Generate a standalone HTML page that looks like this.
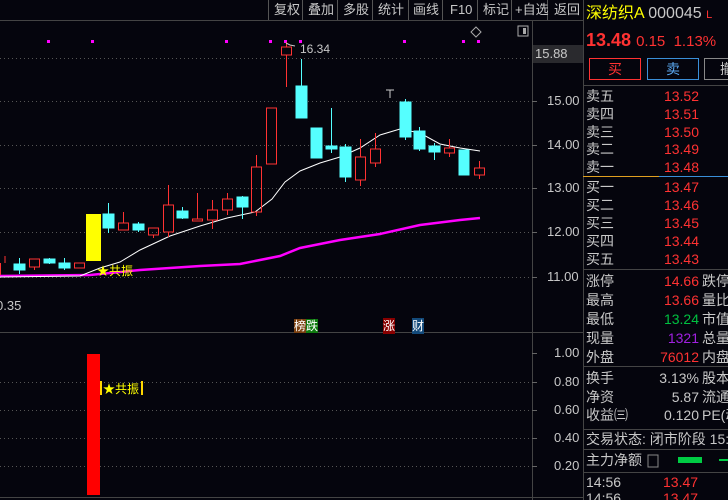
<!DOCTYPE html><html><head><meta charset="utf-8"><style>
html,body{margin:0;width:728px;height:500px;background:#05050d;overflow:hidden;font-family:"Liberation Sans","Noto Sans CJK SC",sans-serif;position:relative}
.t{position:absolute;white-space:nowrap;font-size:13px;line-height:16px}
.p{font-size:14px}
.g{color:#c8c8c8}.r{color:#ff3232}.y{color:#ffff00}
</style></head><body>
<svg width="728" height="500" style="position:absolute;left:0;top:0" xmlns="http://www.w3.org/2000/svg">
<g stroke="#555" stroke-width="1" stroke-dasharray="1,3">
<line x1="0" y1="58.5" x2="532" y2="58.5"/><line x1="0" y1="101.5" x2="532" y2="101.5"/><line x1="0" y1="145.5" x2="532" y2="145.5"/><line x1="0" y1="188.5" x2="532" y2="188.5"/><line x1="0" y1="232.5" x2="532" y2="232.5"/><line x1="0" y1="277.5" x2="532" y2="277.5"/>
<line x1="0" y1="382.5" x2="532" y2="382.5"/><line x1="0" y1="410.5" x2="532" y2="410.5"/><line x1="0" y1="438.5" x2="532" y2="438.5"/><line x1="0" y1="466.5" x2="532" y2="466.5"/>
</g>
<g stroke="#444" fill="none">
<line x1="0" y1="20.5" x2="583" y2="20.5"/>
<line x1="532.5" y1="20" x2="532.5" y2="500"/>
<line x1="0" y1="332.5" x2="583" y2="332.5"/>
<line x1="0" y1="497.5" x2="583" y2="497.5"/>
<line x1="583.5" y1="0" x2="583.5" y2="500"/>
<g stroke="#555"><line x1="268.5" y1="0" x2="268.5" y2="20"/><line x1="302.5" y1="0" x2="302.5" y2="20"/><line x1="337.5" y1="0" x2="337.5" y2="20"/><line x1="372.5" y1="0" x2="372.5" y2="20"/><line x1="408.5" y1="0" x2="408.5" y2="20"/><line x1="442.5" y1="0" x2="442.5" y2="20"/><line x1="477.5" y1="0" x2="477.5" y2="20"/><line x1="511.5" y1="0" x2="511.5" y2="20"/><line x1="547.5" y1="0" x2="547.5" y2="20"/></g>
<g stroke="#666"><line x1="532" y1="101.5" x2="537" y2="101.5"/><line x1="532" y1="145.5" x2="537" y2="145.5"/><line x1="532" y1="188.5" x2="537" y2="188.5"/><line x1="532" y1="232.5" x2="537" y2="232.5"/><line x1="532" y1="277.5" x2="537" y2="277.5"/><line x1="532" y1="353.5" x2="537" y2="353.5"/><line x1="532" y1="382.5" x2="537" y2="382.5"/><line x1="532" y1="410.5" x2="537" y2="410.5"/><line x1="532" y1="438.5" x2="537" y2="438.5"/><line x1="532" y1="466.5" x2="537" y2="466.5"/></g>
</g>
<rect x="533" y="45" width="50" height="18" fill="#2a2a2e"/>
<g fill="#ff00ff"><rect x="47" y="40" width="3" height="3"/><rect x="91" y="40" width="3" height="3"/><rect x="225" y="40" width="3" height="3"/><rect x="269" y="40" width="3" height="3"/><rect x="284" y="40" width="3" height="3"/><rect x="299" y="40" width="3" height="3"/><rect x="403" y="40" width="3" height="3"/><rect x="462" y="40" width="3" height="3"/><rect x="477" y="40" width="3" height="3"/></g>
<polyline fill="none" stroke="#ff00ff" stroke-width="2.5" points="0,276 90,275 140,270 200,266 240,264 280,256 300,248 340,240 380,234 420,225 460,220 480,218"/>
<polyline fill="none" stroke="#fff" stroke-width="1" points="0,277 80,276 100,268 120,262 140,250 170,236 200,226 227,218 255,212 272,199 285,182 300,171 320,163 340,157 360,148 380,135 400,129 420,133 440,144 460,148 480,151"/>
<rect x="86" y="214" width="15" height="47" fill="#ffff00"/>
<g stroke="#ff3232" fill="none">
<path d="M0.5 263v12M5 263v-7M29.5 259h10v8h-10zM34.5 267v3M74.5 263h10v5h-10zM118.5 223h10v7h-10zM123.5 212v11M148.5 228h10v7h-10zM153.5 235v3M163.5 205h10v27h-10zM168.5 185v20M168.5 232v5M192.5 219h10v2h-10zM197.5 193v26M207.5 210h10v10h-10zM212.5 200v10M212.5 220v9M222.5 199h10v11h-10zM227.5 193v6M227.5 210v5M251.5 167h10v45h-10zM256.5 155v12M256.5 212v4M266.5 108h10v56h-10zM281.5 47h10v8h-10zM286.5 42v5M286.5 55v32M355.5 157h10v23h-10zM360.5 139v18M360.5 180v6M370.5 149h10v14h-10zM375.5 133v16M375.5 163v4M444.5 148h10v5h-10zM449.5 139v9M449.5 153v4M474.5 168h10v7h-10zM479.5 161v7M479.5 175v4"/>
</g>
<g fill="#55ffff" stroke="#55ffff">
<rect x="14" y="264" width="11" height="6"/><path d="M19.5 258v16" fill="none"/>
<rect x="44" y="259" width="11" height="4"/><path d="M49.5 258v6" fill="none"/>
<rect x="59" y="263" width="11" height="5"/><path d="M64.5 258v12" fill="none"/>
<rect x="103" y="214" width="11" height="14"/><path d="M108.5 203v30" fill="none"/>
<rect x="177" y="211" width="11" height="7"/><path d="M182.5 207v12" fill="none"/>
<rect x="133" y="224" width="11" height="6"/><path d="M138.5 222v10" fill="none"/>
<rect x="237" y="197" width="11" height="10"/><path d="M242.5 196v23" fill="none"/>
<rect x="296" y="86" width="11" height="32"/><path d="M301.5 59v27" fill="none"/>
<rect x="311" y="128" width="11" height="30"/>
<rect x="326" y="146" width="11" height="3"/><path d="M331.5 108v45" fill="none"/>
<rect x="340" y="147" width="11" height="30"/><path d="M345.5 144v38" fill="none"/>
<rect x="400" y="102" width="11" height="35"/><path d="M405.5 99v41" fill="none"/>
<rect x="414" y="131" width="11" height="18"/><path d="M419.5 127v24" fill="none"/>
<rect x="429" y="146" width="11" height="6"/><path d="M434.5 143v17" fill="none"/>
<rect x="459" y="150" width="10" height="25"/>
</g>
<path d="M286 43l4 2l5 1" stroke="#ccc" fill="none"/>
<path d="M386 90h8M390 90v8" stroke="#ccc" fill="none"/>
<rect x="87" y="354" width="13" height="141" fill="#ff0000"/>
<rect x="100" y="381" width="2" height="14" fill="#ffd700"/><rect x="141" y="381" width="2" height="14" fill="#ffd700"/>
<path d="M476 27l5 5l-5 5l-5-5z" stroke="#aaa" fill="none"/>
<rect x="518" y="26" width="10" height="10" stroke="#aaa" fill="none"/><rect x="523" y="28" width="3" height="6" fill="#aaa"/>
<rect x="589.5" y="58.5" width="51" height="21" stroke="#ff3232" fill="none"/>
<rect x="647.5" y="58.5" width="51" height="21" stroke="#3a8fd8" fill="none"/>
<rect x="704.5" y="58.5" width="30" height="21" stroke="#888" fill="none"/>
<g stroke="#444"><line x1="583" y1="85.5" x2="728" y2="85.5"/><line x1="583" y1="269.5" x2="728" y2="269.5"/><line x1="583" y1="366.5" x2="728" y2="366.5"/><line x1="583" y1="429.5" x2="728" y2="429.5"/><line x1="583" y1="449.5" x2="728" y2="449.5"/><line x1="583" y1="472.5" x2="728" y2="472.5"/></g>
<line x1="583" y1="176.5" x2="659" y2="176.5" stroke="#e0a020"/><line x1="659" y1="176.5" x2="728" y2="176.5" stroke="#3a8fd8"/>
<rect x="678" y="457" width="24" height="6" fill="#00cc44"/><rect x="719" y="459" width="9" height="2" fill="#00cc44"/>
<rect x="648" y="455" width="10" height="12" stroke="#888" fill="none"/>
</svg>
<div class="t g" style="left:274px;top:2px">复权</div><div class="t g" style="left:308px;top:2px">叠加</div><div class="t g" style="left:343px;top:2px">多股</div><div class="t g" style="left:378px;top:2px">统计</div><div class="t g" style="left:413px;top:2px">画线</div><div class="t g" style="left:450px;top:2px">F10</div><div class="t g" style="left:483px;top:2px">标记</div><div class="t g" style="left:515px;top:2px">+自选</div><div class="t g" style="left:554px;top:2px">返回</div>
<div class="t g" style="left:300px;top:41px;font-size:12px">16.34</div>
<div class="t g" style="left:535px;top:46px">15.88</div>
<div class="t g" style="left:547px;top:93px">15.00</div><div class="t g" style="left:547px;top:137px">14.00</div><div class="t g" style="left:547px;top:180px">13.00</div><div class="t g" style="left:547px;top:224px">12.00</div><div class="t g" style="left:547px;top:269px">11.00</div>
<div class="t g" style="left:554px;top:345px">1.00</div><div class="t g" style="left:554px;top:374px">0.80</div><div class="t g" style="left:554px;top:402px">0.60</div><div class="t g" style="left:554px;top:430px">0.40</div><div class="t g" style="left:554px;top:458px">0.20</div>
<div class="t g" style="left:-4px;top:298px">0.35</div>
<div class="t y" style="left:97px;top:263px;font-size:12px">★共振</div>
<div class="t y" style="left:103px;top:381px;font-size:12px">★共振</div>
<div class="t" style="left:294px;top:318px;font-size:12px;color:#fff"><span style="background:#7a4010">榜</span><span style="background:#107a10">跌</span></div>
<div class="t" style="left:383px;top:318px;font-size:12px;color:#fff;background:#800">涨</div>
<div class="t" style="left:412px;top:318px;font-size:12px;color:#fff;background:#134a7a">财</div>
<div class="t y" style="left:586px;top:5px;font-size:16px;line-height:18px">深纺织A <span class="g">000045</span> <span class="r" style="font-size:11px">L</span></div>
<div class="t r" style="left:586px;top:30px;font-size:18px;line-height:20px"><b>13.48</b> <span style="font-size:15px">0.15&nbsp; 1.13%</span></div>
<div class="t r p" style="left:608px;top:61px">买</div><div class="t p" style="left:666px;top:61px;color:#5aa8f0">卖</div><div class="t g p" style="left:720px;top:61px">撤</div>
<div class="t g p" style="left:586px;top:88px;line-height:17.8px">卖五<br>卖四<br>卖三<br>卖二<br>卖一</div>
<div class="t r p" style="left:659px;top:88px;line-height:17.8px;text-align:right;width:40px">13.52<br>13.51<br>13.50<br>13.49<br>13.48</div>
<div class="t g p" style="left:586px;top:178px;line-height:18px">买一<br>买二<br>买三<br>买四<br>买五</div>
<div class="t r p" style="left:659px;top:178px;line-height:18px;text-align:right;width:40px">13.47<br>13.46<br>13.45<br>13.44<br>13.43</div>
<div class="t g p" style="left:586px;top:272px;line-height:19px">涨停<br>最高<br>最低<br>现量<br>外盘</div>
<div class="t p" style="left:640px;top:272px;line-height:19px;text-align:right;width:59px"><span class="r">14.66</span><br><span class="r">13.66</span><br><span style="color:#00c040">13.24</span><br><span style="color:#a020e0">1321</span><br><span class="r">76012</span></div>
<div class="t g p" style="left:702px;top:272px;line-height:19px">跌停<br>量比<br>市值<br>总量<br>内盘</div>
<div class="t g p" style="left:586px;top:369px;line-height:18.5px">换手<br>净资<br>收益㈢</div>
<div class="t g p" style="left:640px;top:369px;line-height:18.5px;text-align:right;width:59px">3.13%<br>5.87<br>0.120</div>
<div class="t g p" style="left:702px;top:369px;line-height:18.5px">股本<br>流通<br>PE(动</div>
<div class="t g p" style="left:586px;top:431px">交易状态: 闭市阶段 15:00</div>
<div class="t g p" style="left:586px;top:452px">主力净额</div>
<div class="t g p" style="left:586px;top:474px;line-height:16px">14:56<br>14:56</div>
<div class="t r p" style="left:663px;top:474px;line-height:16px">13.47<br>13.47</div>
</body></html>
